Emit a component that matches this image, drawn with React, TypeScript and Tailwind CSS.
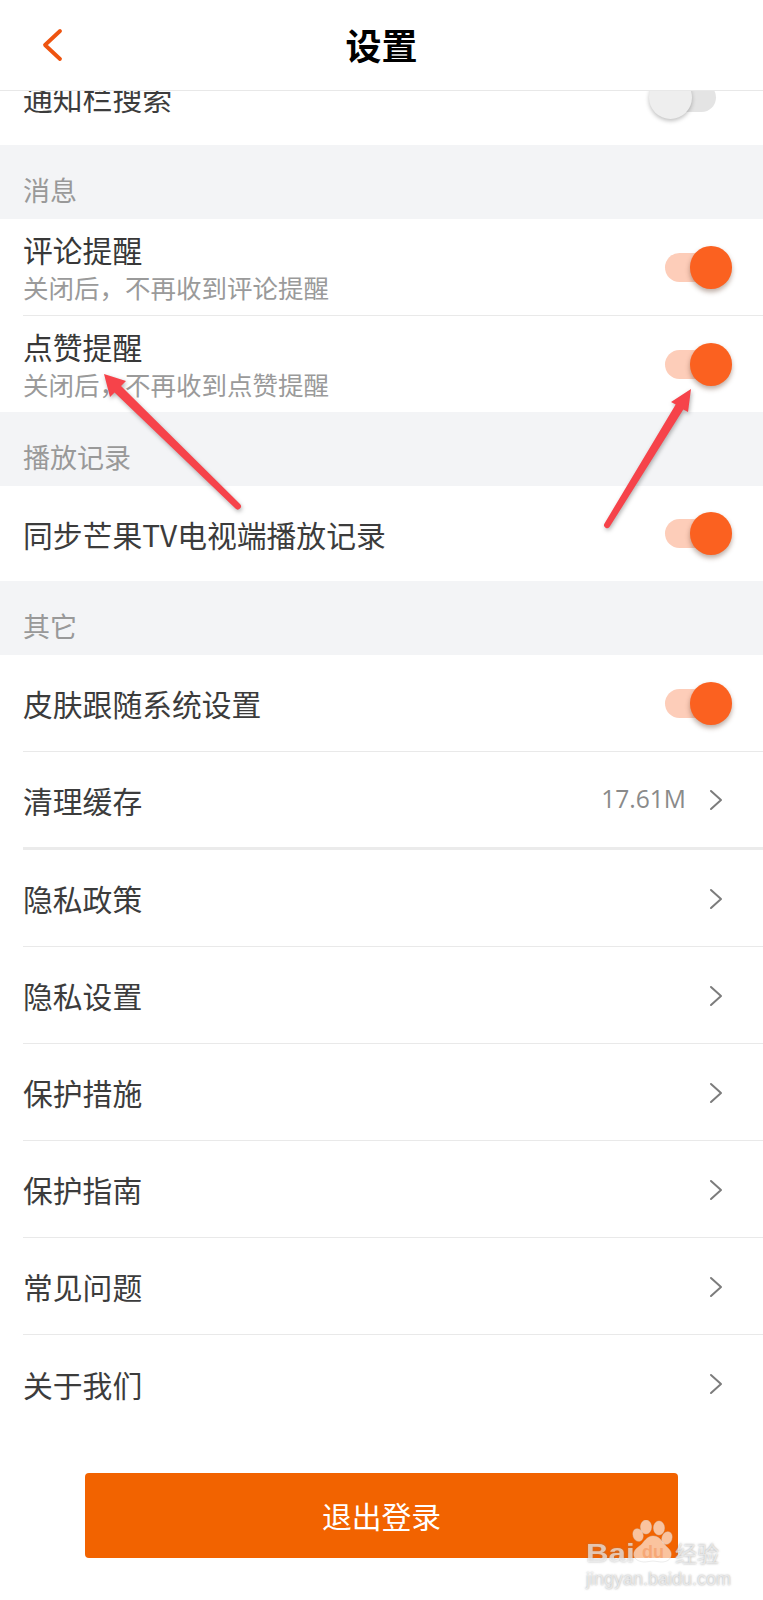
import React from "react";

const CJK = "font-['Noto_Sans_CJK_SC','Noto_Sans',sans-serif]";

function Toggle({ on = true }: { on?: boolean }) {
  return (
    <div className={`relative h-[29px] w-[50px] shrink-0 rounded-full ${on ? "mr-[48px] bg-[#fdcdb9]" : "mr-[47px] bg-[#e4e4e4]"}`}>
      <div
        className={
          on
            ? "absolute right-[-17px] top-[-7px] h-[43px] w-[42px] rounded-full bg-[#fb6120] shadow-[0_3px_5px_rgba(90,50,30,0.4)]"
            : "absolute left-[-17px] top-[-7px] h-[43px] w-[43px] rounded-full bg-[#eeeeee] shadow-[0_2px_4px_rgba(0,0,0,0.25)]"
        }
      />
    </div>
  );
}

function Chevron() {
  return (
    <svg width="14" height="22" viewBox="0 0 14 22" fill="none" className="mr-[40px] mt-[1px] shrink-0">
      <path d="M2 2l10 9-10 9" stroke="#7c7c7c" strokeWidth="2" strokeLinecap="round" strokeLinejoin="round" />
    </svg>
  );
}

function SectionLabel({ children }: { children: React.ReactNode }) {
  return (
    <div className="flex h-[74px] items-center bg-[#f3f4f6] pl-[23px] pt-[15px] text-[27px] leading-none text-[#999999]">
      {children}
    </div>
  );
}

function Row({
  title,
  sub,
  right,
  divider = "thin",
  h = "h-[97px]",
}: {
  title: string;
  sub?: string;
  right?: React.ReactNode;
  divider?: "thin" | "thick" | "none";
  h?: string;
}) {
  const border =
    divider === "thin"
      ? "border-b border-[#e9e9e9]"
      : divider === "thick"
        ? "border-b-[3px] border-[#ebebeb]"
        : "";
  return (
    <div className="pl-[23px]">
      <div className={`flex ${h} items-center justify-between ${border}`}>
        {sub ? (
          <div className="flex flex-col pt-[2px]">
            <span className="text-[29.8px] leading-[37px] text-[#383838]">{title}</span>
            <span className="text-[25.5px] leading-[37px] text-[#9a9a9a]">{sub}</span>
          </div>
        ) : (
          <span className="text-[29.8px] leading-[40px] text-[#3c3c3c]">{title}</span>
        )}
        {right}
      </div>
    </div>
  );
}

function Arrows() {
  return (
    <svg
      width="763"
      height="1600"
      viewBox="0 0 763 1600"
      fill="#f6434a"
      className="pointer-events-none absolute left-0 top-0 drop-shadow-[1px_2px_2px_rgba(0,0,0,0.3)]"
    >
      <path d="M104 374L126 381L121 386L240 504A2.8 2.8 0 0 1 235.5 508.5L114.5 392.5L110 397Z" />
      <path d="M691 389L688 412L683.3 409.4L609.8 526.6A2.8 2.8 0 0 1 604.5 523.4L675.7 404.6L671 402Z" />
    </svg>
  );
}

function Watermark() {
  return (
    <div className="pointer-events-none absolute left-[584px] top-[1520px] h-[68px] w-[140px]">
      <svg width="140" height="46" viewBox="0 0 140 46" className="absolute left-0 top-0">
        <g fill="#ffffff" fillOpacity="0.62" stroke="#d0d0d0" strokeOpacity="0.4">
          <ellipse cx="62" cy="7" rx="5.5" ry="7" />
          <ellipse cx="75" cy="8" rx="5.5" ry="7" />
          <ellipse cx="54" cy="15" rx="5" ry="6.5" transform="rotate(-20 54 15)" />
          <ellipse cx="83" cy="18" rx="5" ry="6.5" transform="rotate(20 83 18)" />
          <path d="M69 16c6 0 9 5 12 9 4 4 7 6 6 11-1 5-6 6-10 6-3 0-5-1-8-1s-5 1-8 1c-5 0-10-2-11-6-1-6 3-8 7-11 3-3 6-9 12-9z" />
        </g>
      </svg>
      <span className="absolute left-[2px] top-[19px] origin-left scale-x-[1.2] font-['Liberation_Sans',sans-serif] text-[26px] font-bold leading-[28px] text-white/60 [text-shadow:0_0_2px_rgba(130,130,130,0.6)]">
        Bai
      </span>
      <span className="absolute left-[58px] top-[22px] font-['Liberation_Sans',sans-serif] text-[18px] font-bold leading-[20px] text-[#f6a877]">
        du
      </span>
      <span className={`absolute left-[91px] top-[20px] ${CJK} text-[22px] leading-[24px] text-white/60 [text-shadow:0_0_2px_rgba(120,120,120,0.7)]`}>
        经验
      </span>
      <span className="absolute left-[2px] top-[50px] font-['Liberation_Sans',sans-serif] text-[18px] leading-[18px] text-white/60 [text-shadow:0_0_2px_rgba(120,120,120,0.7)]">
        jingyan.baidu.com
      </span>
    </div>
  );
}

export default function App() {
  return (
    <div className={`relative h-[1600px] w-[763px] overflow-hidden bg-white ${CJK}`}>
      <header className="relative flex h-[91px] items-center justify-center border-b border-[#e8e8e8] pb-[2px]">
        <svg width="24" height="36" viewBox="0 0 24 36" fill="none" className="absolute left-[40px] top-[27px]">
          <path d="M20 4L5 18l15 14" stroke="#ee5410" strokeWidth="3.8" strokeLinecap="round" strokeLinejoin="round" />
        </svg>
        <h1 className="text-[36px] font-bold leading-none text-black">设置</h1>
      </header>

      <div className="flex h-[54px] items-end overflow-hidden">
        <div className="flex h-[96px] w-full shrink-0 items-center justify-between pl-[23px]">
          <span className="text-[29.8px] leading-[40px] text-[#3c3c3c]">通知栏搜索</span>
          <Toggle on={false} />
        </div>
      </div>

      <SectionLabel>消息</SectionLabel>
      <Row title="评论提醒" sub="关闭后，不再收到评论提醒" right={<Toggle />} />
      <Row title="点赞提醒" sub="关闭后，不再收到点赞提醒" right={<Toggle />} divider="none" h="h-[96px]" />
      <SectionLabel>播放记录</SectionLabel>
      <Row title="同步芒果TV电视端播放记录" right={<Toggle />} divider="none" h="h-[95px]" />
      <SectionLabel>其它</SectionLabel>
      <Row title="皮肤跟随系统设置" right={<Toggle />} />
      <Row
        title="清理缓存"
        divider="thick"
        h="h-[98px]"
        right={
          <div className="flex items-center">
            <span className="mr-[23px] font-['Open_Sans',sans-serif] text-[24.6px] leading-none text-[#8a8a8a]">17.61M</span>
            <Chevron />
          </div>
        }
      />
      <Row title="隐私政策" right={<Chevron />} />
      <Row title="隐私设置" right={<Chevron />} />
      <Row title="保护措施" right={<Chevron />} />
      <Row title="保护指南" right={<Chevron />} />
      <Row title="常见问题" right={<Chevron />} />
      <Row title="关于我们" right={<Chevron />} divider="none" />

      <div className="flex justify-center pt-[41px]">
        <button className="flex h-[85px] w-[593px] items-center justify-center rounded-[4px] bg-[#f26300] text-[29.8px] leading-none text-white">
          退出登录
        </button>
      </div>

      <Arrows />
      <Watermark />
    </div>
  );
}
